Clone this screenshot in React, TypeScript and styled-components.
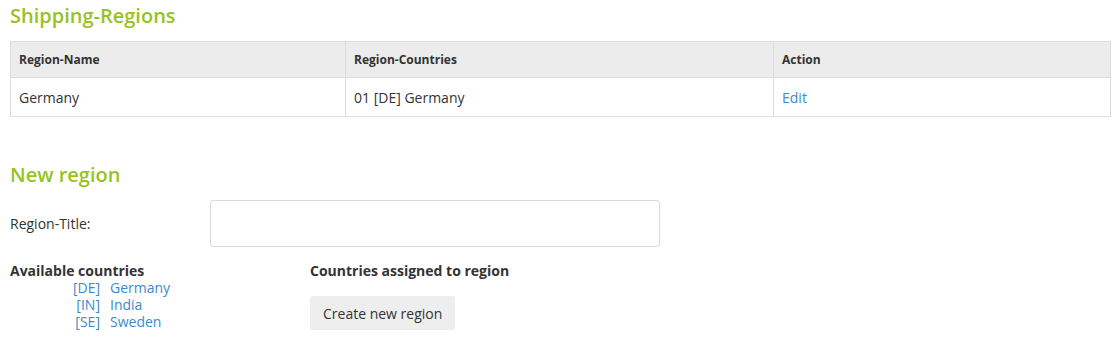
import { FunctionComponent, Fragment } from "react";
import styled, { createGlobalStyle } from "styled-components";

const GlobalStyle = createGlobalStyle`
	body {
		margin: 0;
		background: #fff;
		font-family: "Open Sans", "Liberation Sans", sans-serif;
		font-size: 14px;
		color: #333;
	}
`;

const Page = styled.div`
	padding: 0 10px;
`;

const Heading = styled.h2<{ $top: number }>`
	margin: ${(props) => props.$top}px 0 14px;
	font-size: 20px;
	line-height: 22px;
	font-weight: 600;
	color: #98c21f;
`;

const Table = styled.table`
	width: 1100px;
	border-collapse: collapse;
	table-layout: fixed;
`;

const Th = styled.th<{ $width: number }>`
	box-sizing: border-box;
	width: ${(props) => props.$width}px;
	text-align: left;
	padding: 9px 8px;
	font-size: 12px;
	line-height: 17px;
	font-weight: 700;
	background: #ececec;
	border: 1px solid #dddddd;
`;

const Td = styled.td`
	padding: 10px 8px 8px;
	font-size: 14px;
	line-height: 20px;
	border: 1px solid #dddddd;
`;

const Link = styled.a`
	color: #3a8bcd;
	text-decoration: none;
	cursor: pointer;
`;

const FormRow = styled.div`
	display: flex;
	align-items: center;
	margin-bottom: 14px;
`;

const Label = styled.label`
	width: 200px;
	font-size: 14px;
`;

const Input = styled.input`
	box-sizing: border-box;
	width: 450px;
	height: 47px;
	border: 1px solid #d9d9d9;
	border-radius: 3px;
	padding: 6px 12px;
	font-family: inherit;
	font-size: 14px;
`;

const Columns = styled.div`
	display: grid;
	grid-template-columns: 300px 1fr;
`;

const ColTitle = styled.div`
	font-size: 14px;
	font-weight: 700;
	line-height: 17px;
	padding-top: 1px;
`;

const CountryList = styled.div`
	display: grid;
	grid-template-columns: 90px auto;
	column-gap: 10px;
	justify-content: start;
	line-height: 17px;
	font-size: 14px;
`;

const Code = styled(Link)`
	text-align: right;
`;

const Button = styled.button`
	margin-top: 17px;
	height: 34px;
	padding: 0 13px;
	border: none;
	border-radius: 3px;
	background: #eeeeee;
	color: #333;
	font-family: inherit;
	font-size: 14px;
	cursor: pointer;
`;

const countries = [
	{ code: "DE", name: "Germany" },
	{ code: "IN", name: "India" },
	{ code: "SE", name: "Sweden" },
];

const App: FunctionComponent = () => {
	return (
		<Page>
			<GlobalStyle />
			<Heading $top={5}>Shipping-Regions</Heading>
			<Table>
				<thead>
					<tr>
						<Th $width={335}>Region-Name</Th>
						<Th $width={428}>Region-Countries</Th>
						<Th $width={337}>Action</Th>
					</tr>
				</thead>
				<tbody>
					<tr>
						<Td>Germany</Td>
						<Td>01 [DE] Germany</Td>
						<Td>
							<Link>Edit</Link>
						</Td>
					</tr>
				</tbody>
			</Table>

			<Heading $top={47}>New region</Heading>
			<FormRow>
				<Label>Region-Title:</Label>
				<Input type="text" />
			</FormRow>
			<Columns>
				<div>
					<ColTitle>Available countries</ColTitle>
					<CountryList>
						{countries.map((c) => (
							<Fragment key={c.code}>
								<Code>[{c.code}]</Code>
								<Link>{c.name}</Link>
							</Fragment>
						))}
					</CountryList>
				</div>
				<div>
					<ColTitle>Countries assigned to region</ColTitle>
					<Button>Create new region</Button>
				</div>
			</Columns>
		</Page>
	);
};

export default App;
